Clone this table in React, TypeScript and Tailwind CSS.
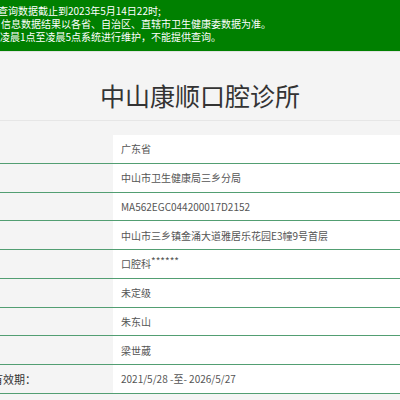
import React from "react";

const rows: { label: string; value: React.ReactNode }[] = [
  { label: "", value: "广东省" },
  { label: "", value: "中山市卫生健康局三乡分局" },
  { label: "", value: "MA562EGC044200017D2152" },
  { label: "", value: "中山市三乡镇金涌大道雅居乐花园E3幢9号首层" },
  {
    label: "",
    value: (
      <span>
        口腔科<span className="relative top-[-3px]">******</span>
      </span>
    ),
  },
  { label: "", value: "未定级" },
  { label: "", value: "朱东山" },
  { label: "", value: "梁世葳" },
  { label: "有效期：", value: "2021/5/28 -至- 2026/5/27" },
];

export default function App() {
  return (
    <div
      className="w-[400px] h-[400px] overflow-hidden bg-[#f4f4f4] text-[#333]"
      style={{ fontFamily: '"Noto Sans CJK SC", "Noto Sans", sans-serif' }}
    >
      <div className="bg-[#008000] text-white text-[10px] leading-[13.3px] h-[52px] pt-[3.5px] border-b border-[#e2e2e2]">
        <div className="ml-[-2px] whitespace-nowrap">查询数据截止到2023年5月14日22时;</div>
        <div className="ml-[1px] whitespace-nowrap">信息数据结果以各省、自治区、直辖市卫生健康委数据为准。</div>
        <div className="ml-[0px] whitespace-nowrap">凌晨1点至凌晨5点系统进行维护，不能提供查询。</div>
      </div>
      <div className="h-[69px] pt-[28px] border-b border-[#e6e6e6] text-center text-[25px] leading-[30px] text-[#333]">
        中山康顺口腔诊所
      </div>
      <div className="mt-[14px]">
        {rows.map((r, i) => (
          <div
            key={i}
            className="flex h-[28.75px] border-b border-[#529e72]"
          >
            <div className="w-[113px] shrink-0 flex items-center text-[11px] text-[#333] whitespace-nowrap">
              <span className="ml-[-8px]">{r.label}</span>
            </div>
            <div className="flex-1 bg-white flex items-center pl-[8px] text-[10px] text-[#555] whitespace-nowrap">
              {r.value}
            </div>
          </div>
        ))}
      </div>
    </div>
  );
}
